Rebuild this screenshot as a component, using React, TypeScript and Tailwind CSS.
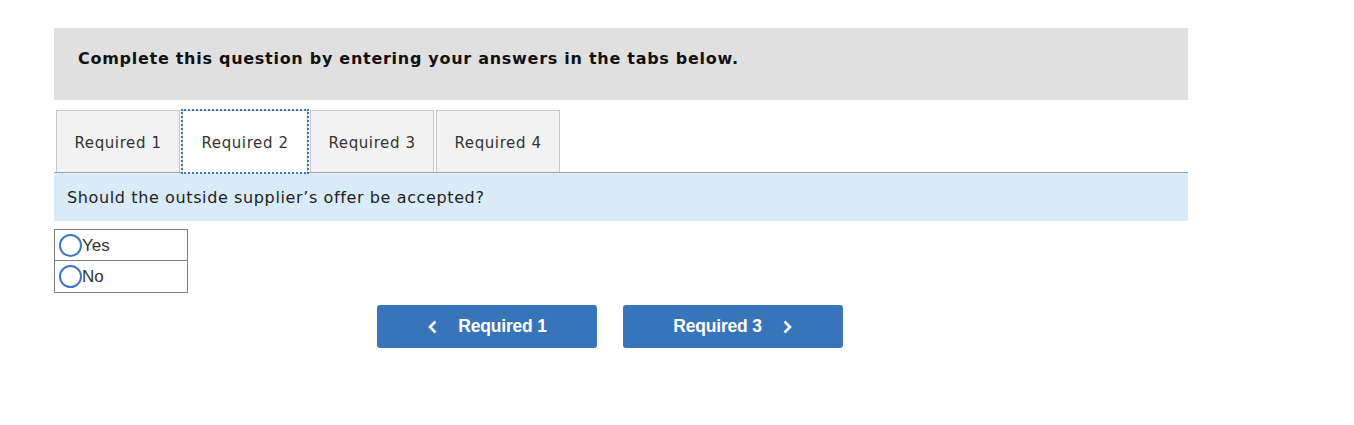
import { type FC } from 'react';

const tabs = ['Required 1', 'Required 2', 'Required 3', 'Required 4'];

const Radio: FC<{ label: string; last?: boolean }> = ({ label, last }) => (
  <label
    className={`flex items-center h-[31px] pl-[4px] ${last ? '' : 'border-b border-[#808080]'}`}
  >
    <span className="w-[23px] h-[23px] rounded-full border-2 border-[#3f78c0] bg-white shrink-0" />
    <span className="text-[17px] text-[#333] font-['Liberation_Sans',Arial,sans-serif] leading-none">
      {label}
    </span>
  </label>
);

export default function App() {
  return (
    <div className="w-[1354px] h-[425px] bg-white pt-[28px] pl-[54px] font-['DejaVu_Sans',Verdana,sans-serif]">
      <div className="w-[1134px]">
        {/* Header */}
        <div className="h-[72px] bg-[#e0e0e0] pl-[24px] pt-[19px]">
          <p className="text-[16px] font-bold text-[#111] tracking-[0.72px]">
            Complete this question by entering your answers in the tabs below.
          </p>
        </div>

        {/* Tabs */}
        <div className="mt-[10px] flex items-end gap-[2px] pl-[2px] border-b border-[#a3a3a3] h-[63px]">
          {tabs.map((t, i) =>
            i === 1 ? (
              <div
                key={t}
                className="relative -mb-px h-[63px] w-[126px] bg-white border-x border-t border-[#c8c8c8] flex items-center justify-center pt-[2px] text-[15px] text-[#333] tracking-[0.6px] outline-2 outline-dotted outline-[#3a73b8] -outline-offset-1"
              >
                {t}
              </div>
            ) : (
              <div
                key={t}
                className="h-[62px] w-[124px] bg-[#f2f2f2] border-x border-t border-[#c8c8c8] flex items-center justify-center pt-[3px] text-[15px] text-[#333] tracking-[0.6px]"
              >
                {t}
              </div>
            )
          )}
        </div>

        {/* Question */}
        <div className="h-[48px] bg-[#d9ebf9] flex items-center pl-[13px] pt-[2px] text-[16px] text-[#222] tracking-[0.62px]">
          Should the outside supplier’s offer be accepted?
        </div>

        {/* Options */}
        <div className="mt-[8px] w-[134px] border border-[#808080]">
          <Radio label="Yes" />
          <Radio label="No" last />
        </div>

        {/* Nav buttons */}
        <div className="mt-[12px] flex justify-center gap-[26px] pr-[22px]">
          <button className="w-[220px] h-[43px] rounded-[3px] bg-[#3874b9] text-white font-bold text-[17.5px] font-['Liberation_Sans',Arial,sans-serif] flex items-center justify-center gap-[19px]">
            <svg width="12" height="14" viewBox="0 0 12 14" fill="none">
              <path d="M8.5 1.5 3 7l5.5 5.5" stroke="white" strokeWidth="2.6" />
            </svg>
            <span className="tracking-[-0.2px]">Required 1</span>
          </button>
          <button className="w-[220px] h-[43px] rounded-[3px] bg-[#3874b9] text-white font-bold text-[17.5px] font-['Liberation_Sans',Arial,sans-serif] flex items-center justify-center gap-[19px]">
            <span className="tracking-[-0.2px]">Required 3</span>
            <svg width="12" height="14" viewBox="0 0 12 14" fill="none">
              <path d="M3.5 1.5 9 7l-5.5 5.5" stroke="white" strokeWidth="2.6" />
            </svg>
          </button>
        </div>
      </div>
    </div>
  );
}
